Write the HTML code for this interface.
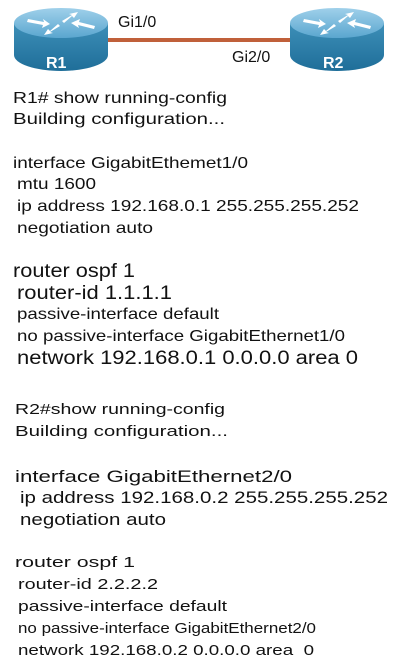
<!DOCTYPE html>
<html><head><meta charset="utf-8"><style>
html,body{margin:0;padding:0;background:#fff;width:402px;height:667px;overflow:hidden}
svg{display:block}
text{font-family:"Liberation Sans",Arial,sans-serif;fill:#111}
</style></head><body>
<svg width="402" height="667" viewBox="0 0 402 667">
<defs>
<linearGradient id="bd" x1="0" x2="0" y1="0" y2="1"><stop offset="0" stop-color="#3d8fb8"/><stop offset="1" stop-color="#1f6e99"/></linearGradient>
<linearGradient id="tp" x1="0" x2="0" y1="0" y2="1"><stop offset="0" stop-color="#9fd0ea"/><stop offset="1" stop-color="#5aa6cf"/></linearGradient>
<g id="rt">
<path d="M0 18 L0 50 A47 16 0 0 0 94 50 L94 18 Z" fill="url(#bd)"/>
<ellipse cx="47" cy="18" rx="47" ry="15" fill="url(#tp)"/>
<g fill="#fff" stroke="none">
<path d="M14 14 L30 17 L29 14 L36 19 L28 23 L29 20 L13 17 Z"/>
<path d="M48 16 L58 10 L55 9 L64 7 L60 13 L58 11 L50 18 Z"/>
<path d="M80 24 L64 20 L65 23 L57 18 L66 14 L65 17 L81 21 Z"/>
<path d="M46 21 L36 27 L39 28 L30 30 L34 24 L36 26 L44 19 Z"/>
</g>
</g>
</defs>
<line x1="104" y1="40" x2="292" y2="40" stroke="#c0603a" stroke-width="4"/>
<use href="#rt" x="14" y="5"/>
<use href="#rt" x="290" y="5"/>
<text x="46" y="68" style="font-weight:bold;fill:#fff" font-size="16">R1</text>
<text x="323" y="68" style="font-weight:bold;fill:#fff" font-size="16">R2</text>
<text x="118" y="27" font-size="16">Gi1/0</text>
<text x="232" y="62" font-size="16">Gi2/0</text>

<g font-size="16">
<text x="13" y="103" textLength="214" lengthAdjust="spacingAndGlyphs">R1# show running-config</text>
<text x="13" y="124" textLength="212" lengthAdjust="spacingAndGlyphs">Building configuration...</text>
<text x="13" y="168" textLength="235" lengthAdjust="spacingAndGlyphs">interface GigabitEthemet1/0</text>
<text x="17" y="189" textLength="79" lengthAdjust="spacingAndGlyphs">mtu 1600</text>
<text x="17" y="211" textLength="342" lengthAdjust="spacingAndGlyphs">ip address 192.168.0.1 255.255.255.252</text>
<text x="17" y="233" textLength="136" lengthAdjust="spacingAndGlyphs">negotiation auto</text>
<text x="13" y="277" font-size="19" textLength="122" lengthAdjust="spacingAndGlyphs">router ospf 1</text>
<text x="17" y="299" font-size="19" textLength="155" lengthAdjust="spacingAndGlyphs">router-id 1.1.1.1</text>
<text x="17" y="319" textLength="202" lengthAdjust="spacingAndGlyphs">passive-interface default</text>
<text x="17" y="341" textLength="328" lengthAdjust="spacingAndGlyphs">no passive-interface GigabitEthernet1/0</text>
<text x="17" y="364" font-size="19" textLength="341" lengthAdjust="spacingAndGlyphs">network 192.168.0.1 0.0.0.0 area 0</text>

<text x="15" y="414" font-size="15" textLength="210" lengthAdjust="spacingAndGlyphs">R2#show running-config</text>
<text x="15" y="436" font-size="15" textLength="213" lengthAdjust="spacingAndGlyphs">Building configuration...</text>
<text x="15" y="482" font-size="17" textLength="277" lengthAdjust="spacingAndGlyphs">interface GigabitEthernet2/0</text>
<text x="20" y="503" font-size="17" textLength="368" lengthAdjust="spacingAndGlyphs">ip address 192.168.0.2 255.255.255.252</text>
<text x="20" y="525" font-size="17" textLength="146" lengthAdjust="spacingAndGlyphs">negotiation auto</text>
<text x="15" y="567" font-size="15" textLength="120" lengthAdjust="spacingAndGlyphs">router ospf 1</text>
<text x="18" y="589" font-size="15" textLength="140" lengthAdjust="spacingAndGlyphs">router-id 2.2.2.2</text>
<text x="18" y="611" font-size="15" textLength="209" lengthAdjust="spacingAndGlyphs">passive-interface default</text>
<text x="18" y="633" font-size="15" textLength="298" lengthAdjust="spacingAndGlyphs">no passive-interface GigabitEthernet2/0</text>
<text x="18" y="655" font-size="15" textLength="296" lengthAdjust="spacingAndGlyphs">network 192.168.0.2 0.0.0.0 area&#160; 0</text>
</g>
</svg>
</body></html>
